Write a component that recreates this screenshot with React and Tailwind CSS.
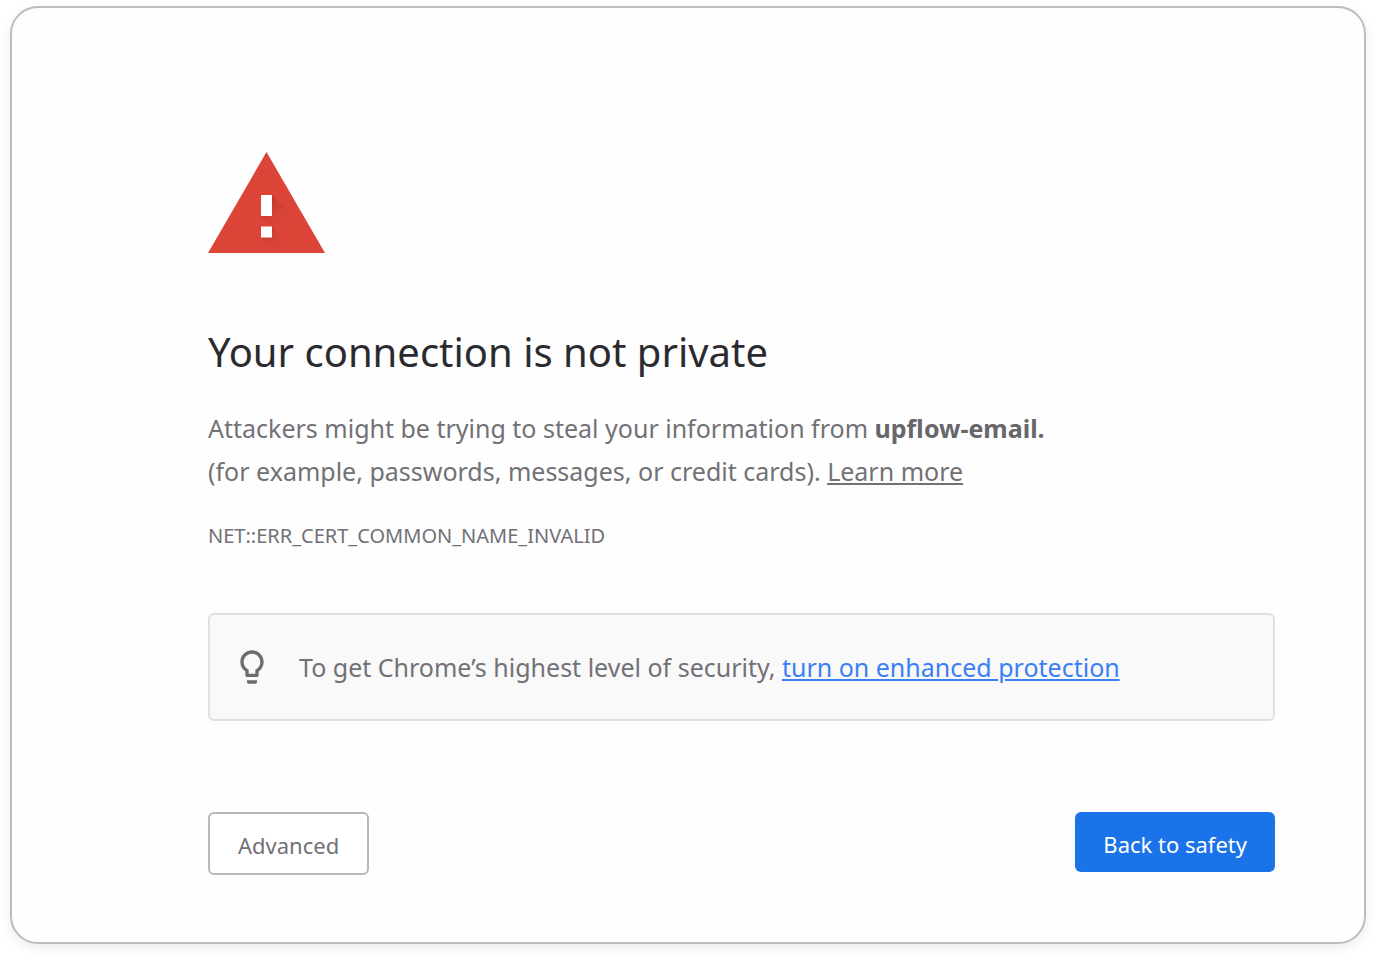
export default function App() {
  return (
    <div className="min-h-screen bg-white px-[10px] pt-[6px] pb-[14px] flex font-['Noto_Sans','Open_Sans',sans-serif] text-[#717176]">
      <main className="flex-1 rounded-[28px] border-2 border-[#bdbdbd] bg-[#fefefe] shadow-[0_4px_12px_rgba(0,0,0,0.08)] pt-36 pl-[196px] pr-[89px]">
        <svg viewBox="0 0 117 102" className="w-[117px] h-[102px]" role="img" aria-label="Warning">
          <defs>
            <linearGradient id="shadeTop" gradientUnits="userSpaceOnUse" x1="58" y1="54" x2="76" y2="72">
              <stop offset="0" stopColor="#b8382d" stopOpacity=".8" />
              <stop offset="1" stopColor="#db4437" stopOpacity="0" />
            </linearGradient>
            <linearGradient id="shadeBottom" gradientUnits="userSpaceOnUse" x1="58" y1="80" x2="73" y2="95">
              <stop offset="0" stopColor="#b8382d" stopOpacity=".8" />
              <stop offset="1" stopColor="#db4437" stopOpacity="0" />
            </linearGradient>
          </defs>
          <path d="M58.500 0 117 101H0Z" fill="#db4437" />
          <path d="M64 43 91 70V101L53 64Z" fill="url(#shadeTop)" />
          <path d="M64 75 90 101H69L53 85Z" fill="url(#shadeBottom)" />
          <path d="M53 43h11v21H53zM53 74.500h11V85.500H53z" fill="#fff" />
        </svg>
        <h1 className="mt-[68px] text-[40px] leading-[60px] text-[#2b2b2f]">Your connection is not private</h1>
        <p className="mt-[25px] text-[25px] leading-[43px]">
          Attackers might be trying to steal your information from <strong className="text-[#66666b]">upflow-email.</strong>
          <br />
          (for example, passwords, messages, or credit cards). <a href="#learn" className="underline">Learn more</a>
        </p>
        <p className="mt-[27px] text-[20px] leading-8">NET::ERR_CERT_COMMON_NAME_INVALID</p>
        <section className="mt-[61px] flex items-center rounded-md border-2 border-[#e0e0e2] bg-[#f9f9fa] h-[108px] pl-[22px]">
          <svg viewBox="0 0 24 24" className="size-10" fill="#6b6b70" aria-hidden="true">
            <path d="M9 21c0 .5.4 1 1 1h4c.6 0 1-.5 1-1v-1H9v1zm3-19C8.1 2 5 5.1 5 9c0 2.400 1.200 4.500 3 5.700V17c0 .5.4 1 1 1h6c.6 0 1-.5 1-1v-2.300c1.800-1.300 3-3.400 3-5.700 0-3.900-3.100-7-7-7zm2.900 11.100-.9.600V16h-4v-2.300l-.9-.6C7.800 12.200 7 10.600 7 9c0-2.800 2.200-5 5-5s5 2.200 5 5c0 1.600-.8 3.200-2.100 4.100z" />
          </svg>
          <p className="ml-[27px] text-[25px] leading-9">
            To get Chrome’s highest level of security, <a href="#protection" className="text-[#3a80f4] underline">turn on enhanced protection</a>
          </p>
        </section>
        <div className="mt-[91px] flex items-start justify-between">
          <button className="h-[63px] rounded-md border-2 border-[#b8b8bb] bg-white px-7 pt-1 text-[22px]">Advanced</button>
          <button className="h-[60px] rounded-md bg-[#1a73e8] px-7 pt-1 text-[22px] text-white">Back to safety</button>
        </div>
      </main>
    </div>
  );
}
